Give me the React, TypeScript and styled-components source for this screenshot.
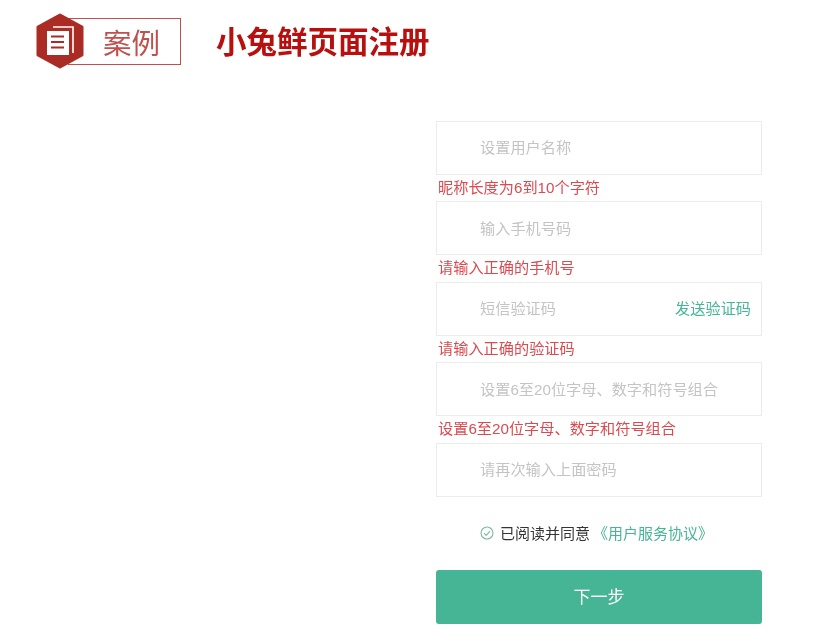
import styled, { createGlobalStyle } from 'styled-components';

const GlobalStyle = createGlobalStyle`
  body {
    margin: 0;
    background: #fff;
    font-family: 'Liberation Sans', 'Noto Sans CJK SC', sans-serif;
  }
`;

const Page = styled.div`
  width: 816px;
  height: 641px;
  overflow: hidden;
  box-sizing: border-box;
  padding-top: 13px;
  filter: blur(0.7px);
`;

const Header = styled.header`
  display: flex;
  align-items: center;
  height: 56px;
  padding-left: 36px;
`;

const Badge = styled.div`
  display: flex;
  align-items: center;
`;

const Hexagon = styled.svg`
  width: 48px;
  height: 56px;
  flex: none;
  position: relative;
  z-index: 1;
`;

const BadgeBox = styled.div`
  box-sizing: border-box;
  width: 113px;
  height: 47px;
  margin-left: -16px;
  padding: 5px 0 0 34px;
  border: 1.5px solid #c0504d;
  color: #c0504d;
  font-size: 28.5px;
  line-height: 41px;
`;

const Title = styled.h1`
  margin: -3px 0 0 35px;
  color: #b80f0f;
  font-size: 30.5px;
  font-weight: 700;
  line-height: 56px;
  font-family: 'Noto Sans CJK SC', sans-serif;
`;

const Form = styled.form`
  display: flex;
  flex-direction: column;
  width: 326px;
  margin: 51.8px 0 0 436px;
`;

const Field = styled.div`
  display: flex;
  align-items: center;
  justify-content: space-between;
  box-sizing: border-box;
  height: 54px;
  padding: 0 10px 3px 43px;
  border: 1px solid #ececec;
  background: #fff;
  font-size: 15.2px;
`;

const Placeholder = styled.span`
  color: #c4c4c4;
`;

const SendCode = styled.span`
  color: #45b595;
`;

const ErrorText = styled.div`
  height: 26.5px;
  padding-left: 2px;
  color: #dc4a50;
  font-size: 15.2px;
  line-height: 26px;
  white-space: nowrap;
`;

const Agreement = styled.div`
  display: flex;
  align-items: center;
  height: 20px;
  margin-top: 26px;
  padding-left: 44px;
  color: #333;
  font-size: 15px;
`;

const CheckIcon = styled.svg`
  width: 14px;
  height: 14px;
  margin-right: 6px;
  flex: none;
`;

const AgreementLink = styled.a`
  margin-left: 3px;
  color: #45b595;
  white-space: nowrap;
`;

const NextButton = styled.button`
  width: 326px;
  height: 54px;
  margin-top: 27px;
  padding-bottom: 3px;
  border: 0;
  border-radius: 3px;
  background: #45b595;
  color: #fff;
  font-family: inherit;
  font-size: 17px;
`;

const App = () => (
  <>
    <GlobalStyle />
    <Page>
      <Header>
        <Badge>
          <Hexagon viewBox="0 0 48 56">
            <polygon
              points="24,2 46,14 46,42 24,54 2,42 2,14"
              fill="#ab2b25"
              stroke="#ab2b25"
              strokeWidth="3"
              strokeLinejoin="round"
            />
            <path d="M17 14h20v26" fill="none" stroke="#fff" strokeWidth="1.6" />
            <rect x="11" y="18" width="22" height="24" fill="#fff" />
            <path d="M15 23.5h13M15 29h13M15 34.5h13" stroke="#ab2b25" strokeWidth="2.2" />
          </Hexagon>
          <BadgeBox>案例</BadgeBox>
        </Badge>
        <Title>小兔鲜页面注册</Title>
      </Header>
      <Form>
        <Field>
          <Placeholder>设置用户名称</Placeholder>
        </Field>
        <ErrorText>昵称长度为6到10个字符</ErrorText>
        <Field>
          <Placeholder>输入手机号码</Placeholder>
        </Field>
        <ErrorText>请输入正确的手机号</ErrorText>
        <Field>
          <Placeholder>短信验证码</Placeholder>
          <SendCode>发送验证码</SendCode>
        </Field>
        <ErrorText>请输入正确的验证码</ErrorText>
        <Field>
          <Placeholder>设置6至20位字母、数字和符号组合</Placeholder>
        </Field>
        <ErrorText>设置6至20位字母、数字和符号组合</ErrorText>
        <Field>
          <Placeholder>请再次输入上面密码</Placeholder>
        </Field>
        <Agreement>
          <CheckIcon viewBox="0 0 14 14">
            <circle cx="7" cy="7" r="6" fill="none" stroke="#7fb8a6" strokeWidth="1.1" />
            <path d="M4 7.2l2.2 2.2L10 5.2" fill="none" stroke="#7fb8a6" strokeWidth="1.1" />
          </CheckIcon>
          已阅读并同意
          <AgreementLink>《用户服务协议》</AgreementLink>
        </Agreement>
        <NextButton type="button">下一步</NextButton>
      </Form>
    </Page>
  </>
);

export default App;
